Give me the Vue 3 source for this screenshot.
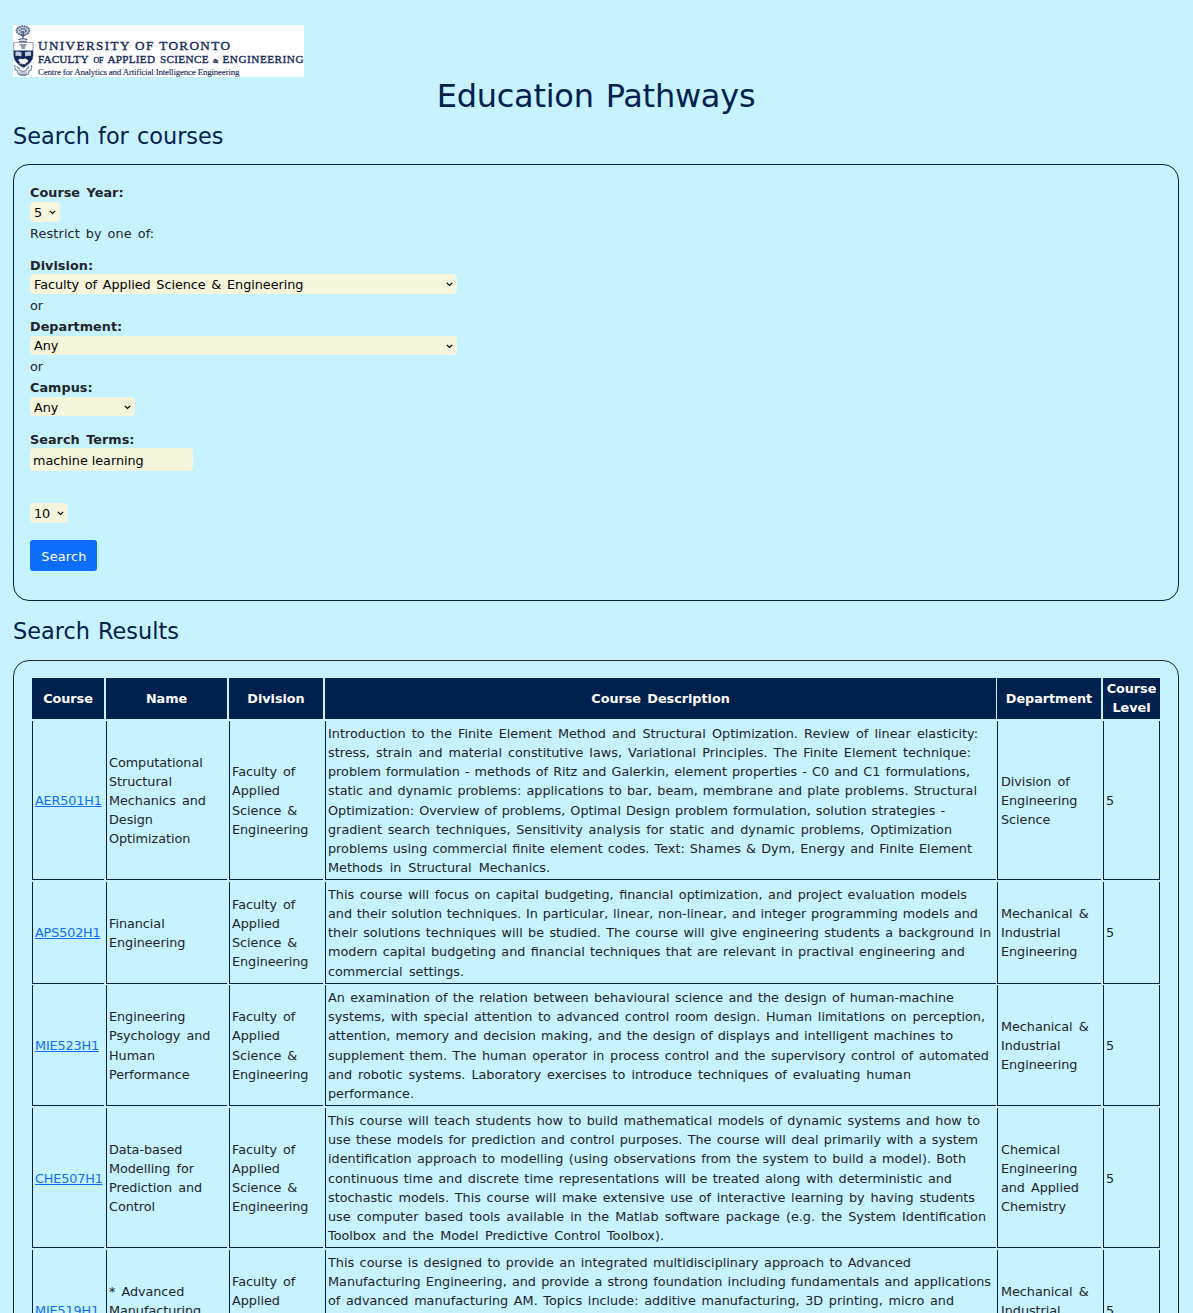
<script setup>
import { ref } from 'vue'

const year = ref('5')
const division = ref('Faculty of Applied Science & Engineering')
const department = ref('Any')
const campus = ref('Any')
const terms = ref('machine learning')
const count = ref('10')

const heads = ['Course', 'Name', 'Division', 'Course Description', 'Department', 'Course\nLevel']
const fase = 'Faculty of\nApplied\nScience &\nEngineering'
const mie = 'Mechanical &\nIndustrial\nEngineering'

// Each description line is paired with its measure in pixels.
const rows = [
  {
    code: 'AER501H1',
    height: 159,
    name: 'Computational\nStructural\nMechanics and\nDesign\nOptimization',
    division: fase,
    description: [
      ['Introduction to the Finite Element Method and Structural Optimization. Review of linear elasticity:', 650],
      ['stress, strain and material constitutive laws, Variational Principles. The Finite Element technique:', 643],
      ['problem formulation - methods of Ritz and Galerkin, element properties - C0 and C1 formulations,', 642],
      ['static and dynamic problems: applications to bar, beam, membrane and plate problems. Structural', 649],
      ['Optimization: Overview of problems, Optimal Design problem formulation, solution strategies -', 617],
      ['gradient search techniques, Sensitivity analysis for static and dynamic problems, Optimization', 624],
      ['problems using commercial finite element codes. Text: Shames & Dym, Energy and Finite Element', 644],
      ['Methods in Structural Mechanics.', 222]
    ],
    department: 'Division of\nEngineering\nScience',
    level: 5
  },
  {
    code: 'APS502H1',
    height: 102,
    name: 'Financial\nEngineering',
    division: fase,
    description: [
      ['This course will focus on capital budgeting, financial optimization, and project evaluation models', 639],
      ['and their solution techniques. In particular, linear, non-linear, and integer programming models and', 650],
      ['their solutions techniques will be studied. The course will give engineering students a background in', 663],
      ['modern capital budgeting and financial techniques that are relevant in practival engineering and', 637],
      ['commercial settings.', 136]
    ],
    department: mie,
    level: 5
  },
  {
    code: 'MIE523H1',
    height: 121,
    name: 'Engineering\nPsychology and\nHuman\nPerformance',
    division: fase,
    description: [
      ['An examination of the relation between behavioural science and the design of human-machine', 626],
      ['systems, with special attention to advanced control room design. Human limitations on perception,', 657],
      ['attention, memory and decision making, and the design of displays and intelligent machines to', 625],
      ['supplement them. The human operator in process control and the supervisory control of automated', 661],
      ['and robotic systems. Laboratory exercises to introduce techniques of evaluating human', 583],
      ['performance.', 87]
    ],
    department: mie,
    level: 5
  },
  {
    code: 'CHE507H1',
    height: 140,
    name: 'Data-based\nModelling for\nPrediction and\nControl',
    division: fase,
    description: [
      ['This course will teach students how to build mathematical models of dynamic systems and how to', 652],
      ['use these models for prediction and control purposes. The course will deal primarily with a system', 650],
      ['identification approach to modelling (using observations from the system to build a model). Both', 638],
      ['continuous time and discrete time representations will be treated along with deterministic and', 624],
      ['stochastic models. This course will make extensive use of interactive learning by having students', 647],
      ['use computer based tools available in the Matlab software package (e.g. the System Identification', 658],
      ['Toolbox and the Model Predictive Control Toolbox).', 336]
    ],
    department: 'Chemical\nEngineering\nand Applied\nChemistry',
    level: 5
  },
  {
    code: 'MIE519H1',
    height: 121,
    name: '* Advanced\nManufacturing\nTechnologies',
    division: fase,
    description: [
      ['This course is designed to provide an integrated multidisciplinary approach to Advanced', 583],
      ['Manufacturing Engineering, and provide a strong foundation including fundamentals and applications', 663],
      ['of advanced manufacturing AM. Topics include: additive manufacturing, 3D printing, micro and', 626],
      ['nano manufacturing, continuous and precision manufacturing, green and biological', 560],
      ['manufacturing. New applications of AM in sectors such as automotive, aerospace,', 560],
      ['biomedical, and electronics.', 190]
    ],
    department: mie,
    level: 5
  }
]
</script>

<template>
  <div class="page">
    <svg class="logo" width="291" height="52" viewBox="0 0 291 52" role="img" aria-label="University of Toronto">
      <rect width="291" height="52" fill="#fff" />
      <g fill="none" stroke="#4a5f83" stroke-width="0.9">
        <ellipse cx="10" cy="5.500" rx="7.500" ry="5.200" fill="#c5cddb" stroke="none" />
        <g stroke-width="1.8" stroke-dasharray="1.5 0.8" stroke="#566a8e">
          <ellipse cx="10" cy="5.500" rx="6.300" ry="4.300" />
          <ellipse cx="10" cy="5.500" rx="3" ry="1.800" />
        </g>
        <path d="M10 6v8M8 10l2 1.500 2-1.500M5.500 14.500q4.500-1.500 9 0M6 16.300h8" stroke="#1d3765" />
        <path d="M.7 17.500h19.300v13q0 7-9.600 12.500Q.7 37.500.7 30.500z" stroke="#8796b0" />
        <path d="M2 40q-1 5 2.500 6l1 3.500h9.500l1-3.500q3.500-1 2.500-6M4 41q1 3 3 3M16 41q-1 3-3 3M6 45q4 3 8 0M6 48h8M7 50.500h6" stroke="#7d8dab" stroke-width="1.200" />
      </g>
      <path d="M.8 25.500h19.200v5q0 6.500-9.600 12Q.8 37 .8 30.500z" fill="#12295a" />
      <path d="M2.500 26.800q3-.6 6 .5v4.200q-3-1-6-.5zM12 27.300q3-1.100 6-.5v4.200q-3-.5-6 .5z" fill="#c3cad8" />
      <path d="M5 35l2.500-1.500 2 .8 3-.7 2.800 2-.8 2-1.500.2-.5 1.700-2-.5-1 .8-1-1.300-2 .5.500-1.800z" fill="#f1f3f7" />
      <path d="M6.500 19h7v1.500h-1l-.5 3.500H8.500L8 20.500H6.500z" fill="#8b9ab4" />
      <g class="logo-text">
        <text x="25" y="25.300" font-size="13.200" textLength="192" lengthAdjust="spacing">UNIVERSITY OF TORONTO</text>
        <text y="37.500" font-size="11.200">
          <tspan x="25" textLength="50.500">FACULTY</tspan>
          <tspan x="80.500" font-size="8" textLength="10">OF</tspan>
          <tspan x="94.500" textLength="47.500">APPLIED</tspan>
          <tspan x="147" textLength="48.500">SCIENCE</tspan>
          <tspan x="200" font-size="7">&amp;</tspan>
          <tspan x="209.500" textLength="81">ENGINEERING</tspan>
        </text>
        <text x="25" y="49.700" class="centre" font-size="9" textLength="201.500">Centre for Analytics and Artificial Intelligence Engineering</text>
      </g>
    </svg>

    <h1>Education Pathways</h1>
    <h2>Search for courses</h2>

    <form class="panel search" @submit.prevent>
      <label>Course Year:</label>
      <select v-model="year" class="year"><option>5</option></select>
      <p class="restrict">Restrict by one of:</p>
      <label class="low">Division:</label>
      <select v-model="division" class="wide"><option>Faculty of Applied Science &amp; Engineering</option></select>
      <p>or</p>
      <label>Department:</label>
      <select v-model="department" class="wide dept"><option>Any</option></select>
      <p>or</p>
      <label>Campus:</label>
      <select v-model="campus" class="campus"><option>Any</option></select>
      <label class="low">Search Terms:</label>
      <input v-model="terms" type="text" />
      <select v-model="count" class="count"><option>10</option></select>
      <button type="submit">Search</button>
    </form>

    <h2 class="results-title">Search Results</h2>

    <section class="panel results">
      <div class="row head">
        <div v-for="h in heads" :key="h" class="cell">{{ h }}</div>
      </div>
      <div v-for="r in rows" :key="r.code" class="row" :style="{ height: r.height + 'px' }">
        <div class="cell"><a href="#">{{ r.code }}</a></div>
        <div class="cell">{{ r.name }}</div>
        <div class="cell">{{ r.division }}</div>
        <div class="cell">
          <div class="desc">
            <span v-for="[text, width] in r.description" :key="text" class="line" :style="{ width: width + 'px' }">{{ text }}</span>
          </div>
        </div>
        <div class="cell">{{ r.department }}</div>
        <div class="cell">{{ r.level }}</div>
      </div>
    </section>
  </div>
</template>

<style>
html,
body {
  background: #c7f2ff;
}
body {
  overflow: hidden;
}
</style>

<style scoped>
* {
  box-sizing: border-box;
}
.page {
  height: 1313px;
  overflow: hidden;
  padding: 25px 14px 0 13px;
  background: #c7f2ff;
  color: #212529;
  font: 12.8px/19.14px Verdana, "DejaVu Sans", sans-serif;
  letter-spacing: -0.04px;
  word-spacing: 2px;
}
.logo {
  display: block;
}
.logo-text {
  font-family: "Liberation Serif", serif;
  fill: #12295a;
  stroke: #12295a;
  stroke-width: 0.35;
  letter-spacing: 0;
  word-spacing: 0;
}
.centre {
  stroke-width: 0.1;
}
h1,
h2,
p {
  margin: 0;
  font-weight: 400;
}
h1 {
  height: 39px;
  font-size: 32px;
  line-height: 39px;
  text-align: center;
  letter-spacing: -0.25px;
  color: #00204e;
}
h2 {
  height: 48px;
  font-size: 22.4px;
  line-height: 40px;
  letter-spacing: 0;
  word-spacing: 1px;
  color: #00204e;
}
.results-title {
  height: 59px;
  line-height: 60px;
}
.panel {
  border: 1px solid #00204e;
  border-radius: 16px;
}
.search {
  display: flex;
  flex-direction: column;
  align-items: flex-start;
  height: 437px;
  padding: 18px 16px 0;
}
label {
  height: 19px;
  line-height: 20px;
  font-weight: 700;
  letter-spacing: 0.03px;
  word-spacing: 2px;
}
.low {
  line-height: 21px;
}
p {
  height: 23px;
  line-height: 23px;
}
.restrict {
  height: 33px;
  letter-spacing: 0.15px;
  word-spacing: 1.6px;
}
select,
input {
  height: 20px;
  margin: 0;
  border: 0;
  border-radius: 4px;
  background-color: #f5f5dc;
  color: #000;
  font: inherit;
  letter-spacing: inherit;
  word-spacing: 1.7px;
}
select {
  appearance: none;
  padding: 1px 0 0 4px;
  background-image: url("data:image/svg+xml,%3Csvg xmlns='http://www.w3.org/2000/svg' width='7' height='5'%3E%3Cpath d='M.8.8l2.700 2.700L6.200.8' fill='none' stroke='%23000' stroke-width='1.200'/%3E%3C/svg%3E");
  background-repeat: no-repeat;
  background-position: right 4px top 8px;
}
.year {
  width: 30px;
}
.wide {
  width: 427px;
}
.dept {
  height: 19px;
  padding-top: 0;
}
.campus {
  width: 105px;
  height: 19px;
  margin-bottom: 13px;
}
input {
  width: 163px;
  height: 23px;
  padding: 2px 3px 1px;
  word-spacing: 0;
}
.count {
  width: 38px;
  margin-top: 32px;
}
button {
  width: 67px;
  height: 31px;
  margin-top: 17px;
  padding: 2px 0 0 1px;
  border: 0;
  border-radius: 3px;
  background: #0d6efd;
  color: #fff;
  font: inherit;
  letter-spacing: 0.25px;
}
.results {
  height: 760px;
  padding: 17px 18px;
  border-color: #212529;
}
.row {
  display: grid;
  grid-template-columns: 72px 121px 94px 671px 103px 57px;
  column-gap: 2px;
  margin-bottom: 2px;
}
.row:nth-child(3) {
  margin-bottom: 1px;
}
.cell {
  display: flex;
  align-items: center;
  padding: 3px 2px 1.8px;
  border-left: 1px solid #00204e;
  border-bottom: 1px solid #00204e;
  white-space: pre;
}
.row:nth-child(3) .cell {
  padding-bottom: 2.8px;
}
.line {
  display: block;
  height: 19.14px;
  letter-spacing: 0;
  word-spacing: 0;
  white-space: normal;
  text-align: justify;
  text-align-last: justify;
}
.cell:nth-child(5) {
  margin-left: -1px;
  padding-left: 3px;
}
.cell:last-child {
  border-right: 1px solid #00204e;
}
.head {
  height: 41px;
  line-height: 19px;
}
.head .cell {
  justify-content: center;
  padding: 1px 2px 2px;
  border: 0;
  background: #00204e;
  color: #fff;
  font-weight: 700;
  text-align: center;
}
a {
  color: #0d6efd;
  letter-spacing: -0.15px;
  text-decoration: underline;
}
</style>
